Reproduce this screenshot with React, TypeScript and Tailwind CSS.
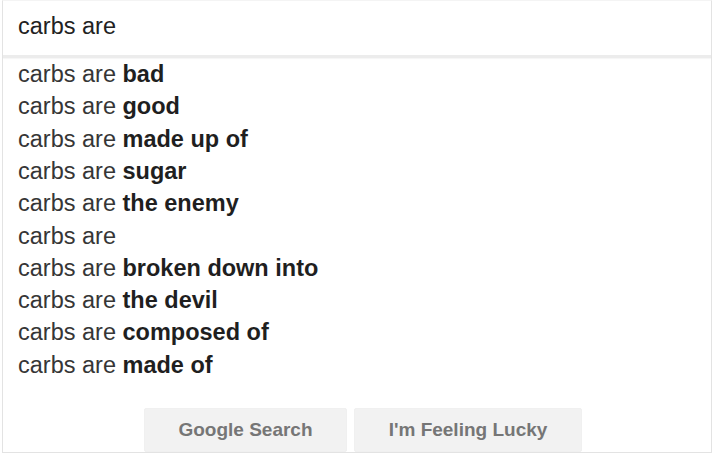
import React from "react";

const query = "carbs are";

const suggestions: string[] = [
  "bad",
  "good",
  "made up of",
  "sugar",
  "the enemy",
  "",
  "broken down into",
  "the devil",
  "composed of",
  "made of",
];

const App: React.FC = () => {
  return (
    <div className="w-[713px] h-[459px] bg-white font-['Liberation_Sans',Arial,sans-serif] overflow-hidden">
      <div className="ml-[2px] w-[710px] h-[453px] border-x border-b border-t border-[#e3e3e3] border-t-[#f4f4f4] flex flex-col">
        {/* Search input */}
        <div className="h-[55px] pl-[15px] pt-[10px] text-[23.5px] leading-[31.6px] text-[#222]">
          {query}
        </div>
        <div className="h-[3px] bg-[#ececec] shadow-[0_1px_1px_rgba(0,0,0,0.04)]" />

        {/* Suggestions */}
        <ul className="pl-[15px]">
          {suggestions.map((s, i) => (
            <li key={i} className="text-[23.5px] leading-[32.3px] text-[#363636] whitespace-pre">
              {query}
              {s && <b className="font-bold text-[#1f1f1f]">{" " + s}</b>}
            </li>
          ))}
        </ul>

        {/* Buttons */}
        <div className="flex gap-[7px] pl-[141px] pt-[27px]">
          <button className="w-[203px] h-[44px] bg-[#f2f2f2] border border-[#f0f0f0] rounded-[2px] text-[19px] font-bold text-[#767676]">
            Google Search
          </button>
          <button className="w-[228px] h-[44px] bg-[#f2f2f2] border border-[#f0f0f0] rounded-[2px] text-[19px] font-bold text-[#767676]">
            I'm Feeling Lucky
          </button>
        </div>
      </div>
    </div>
  );
};

export default App;
